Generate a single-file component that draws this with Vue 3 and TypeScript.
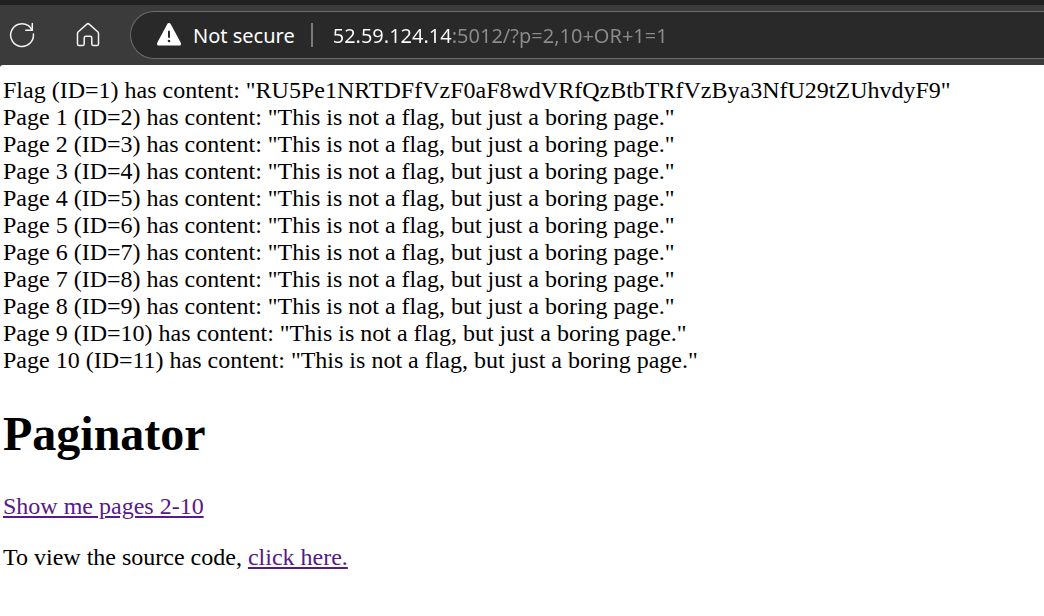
<script setup lang="ts">
import { ref } from 'vue'

interface Entry {
  title: string
  id: number
  content: string
}

const boring = 'This is not a flag, but just a boring page.'

const entries: Entry[] = [
  { title: 'Flag', id: 1, content: 'RU5Pe1NRTDFfVzF0aF8wdVRfQzBtbTRfVzBya3NfU29tZUhvdyF9' },
  ...Array.from({ length: 10 }, (_, i) => ({
    title: `Page ${i + 1}`,
    id: i + 2,
    content: boring,
  })),
]

const address = ref('52.59.124.14:5012/?p=2,10+OR+1=1')
</script>

<template>
  <div class="browser">
    <header class="toolbar">
      <button class="tool" type="button" aria-label="Refresh">
        <svg width="26" height="26" viewBox="0 0 26 26" fill="none" stroke="#f4f4f4" stroke-width="1.5" stroke-linecap="round" stroke-linejoin="round">
          <path d="M24.4 12A11.4 11.4 0 1 1 19.5 3.700Q21.500 5.200 23 7.800" />
          <path d="M23.300 1.600V8.200H16.800" />
        </svg>
      </button>
      <button class="tool" type="button" aria-label="Home">
        <svg width="26" height="26" viewBox="0 0 26 26" fill="none" stroke="#f4f4f4" stroke-width="1.5" stroke-linejoin="round">
          <path d="M11.900 2.100a1.700 1.700 0 0 1 2.200 0l8.600 7.700q.8.700.8 1.800v10.300a1.600 1.600 0 0 1-1.600 1.600h-3.500a1.600 1.600 0 0 1-1.600-1.600v-6a1.700 1.700 0 0 0-1.700-1.700h-4.200a1.700 1.700 0 0 0-1.700 1.700v6a1.600 1.600 0 0 1-1.600 1.600H4.100a1.600 1.600 0 0 1-1.600-1.600V11.600q0-1.100.8-1.800z" />
        </svg>
      </button>
      <div class="omnibox">
        <button class="security" type="button">
          <svg width="26" height="24" viewBox="0 0 26 24">
            <path d="M11.200 1.200a2 2 0 0 1 3.600 0L24.900 20a1.800 1.800 0 0 1-1.600 2.600H2.700A1.800 1.800 0 0 1 1.100 20z" fill="#fff" />
            <path d="M13 8.500v5.500" stroke="#292929" stroke-width="2" stroke-linecap="round" />
            <circle cx="13" cy="18" r="1.300" fill="#292929" />
          </svg>
          <span>Not secure</span>
        </button>
        <span class="divider"></span>
        <input v-model="address" class="address" type="text" aria-label="Address" spellcheck="false" />
      </div>
    </header>

    <main class="page">
      <div v-for="entry in entries" :key="entry.id">
        {{ entry.title }} (ID={{ entry.id }}) has content: "{{ entry.content }}"
      </div>
      <h1>Paginator</h1>
      <p><a href="#pages">Show me pages 2-10</a></p>
      <p>To view the source code, <a href="#source">click here.</a></p>
    </main>
  </div>
</template>

<style>
body {
  margin: 0;
  background: #3b3b3b;
}
</style>

<style scoped>
.browser {
  display: flex;
  flex-direction: column;
  min-height: 100vh;
  overflow: hidden;
}

.toolbar {
  display: flex;
  align-items: center;
  box-sizing: border-box;
  height: 65px;
  padding-left: 9px;
  border-top: 5px solid #202020;
  background: #3b3b3b;
  font-family: "Noto Sans", "Open Sans", sans-serif;
}

.tool {
  display: flex;
  margin-right: 40px;
  padding: 0;
  border: 0;
  background: none;
}

.omnibox {
  display: flex;
  flex: 1;
  align-items: center;
  box-sizing: border-box;
  height: 48px;
  margin-left: -11px;
  padding-left: 25px;
  border: 1px solid #6b6b6b;
  border-right: 0;
  border-radius: 24px 0 0 24px;
  background: #292929;
}

.security {
  display: flex;
  align-items: center;
  gap: 11px;
  padding: 0;
  border: 0;
  background: none;
  color: #fff;
  font: inherit;
  font-size: 20px;
  white-space: nowrap;
}

.divider {
  width: 2px;
  height: 24px;
  margin: 0 20px 0 16px;
  background: #7b7b7b;
}

/* The host is brighter than the port and path that follow it. */
.address {
  flex: 1;
  min-width: 0;
  padding: 0;
  border: 0;
  outline: 0;
  background: linear-gradient(90deg, #fff 119px, #8c8c8c 119px);
  background-clip: text;
  color: transparent;
  caret-color: #fff;
  font: inherit;
  font-size: 20px;
}

.page {
  flex: 1;
  padding: 12px 3px;
  border-top-left-radius: 3px;
  background: #fff;
  color: #000;
  font-family: "Liberation Serif", "Times New Roman", serif;
  font-size: 24px;
  line-height: 27px;
}

h1 {
  margin: 32px 0;
  font-size: 48px;
  line-height: 55px;
}

p {
  margin: 24px 0;
}

a {
  color: #551a8b;
}
</style>
